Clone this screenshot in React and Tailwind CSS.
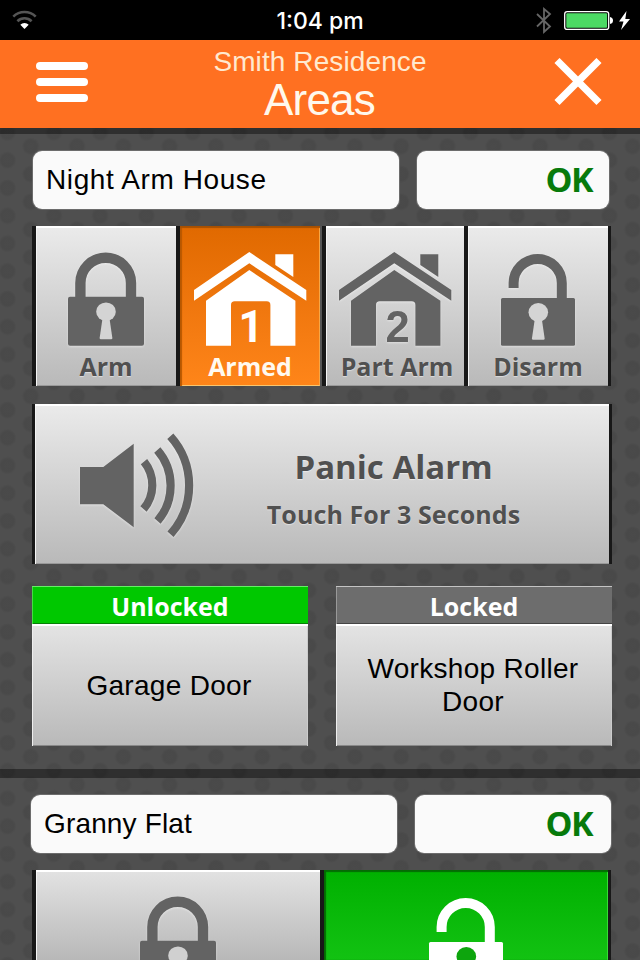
import React from "react";

const SANS = "font-['Liberation_Sans',Arial,sans-serif]";
const HUMANIST = "font-['Open_Sans','Noto_Sans',sans-serif] font-bold";
const SHADOW = "drop-shadow-[0_1px_1px_rgba(255,255,255,0.45)]";

function Keyhole({ x, y, fill }) {
  return (
    <g fill={fill}>
      <ellipse cx={x} cy={y} rx="9.8" ry="9.3" />
      <path d={`M${x - 3.4} ${y + 6}h6.8l3 20.5q-.2 1-1.2 1h-10.4q-1 0-1.2-1z`} />
    </g>
  );
}

function LockIcon({ color, hole }) {
  return (
    <svg viewBox="0 0 140 124" width="140" height="124" className="block shrink-0">
      <path d="M44.4 73V57a25.3 25.3 0 0 1 50.6 0v16" fill="none" stroke={color} strokeWidth="10.4" />
      <rect x="32" y="70.7" width="76" height="49" rx="2" fill={color} />
      <Keyhole x={70} y={85.7} fill={hole} />
    </svg>
  );
}

function UnlockIcon({ color, hole }) {
  return (
    <svg viewBox="0 0 140 124" width="140" height="124" className="block shrink-0">
      <path d="M45.6 62V57a24.1 24.1 0 0 1 48.2 0v16" fill="none" stroke={color} strokeWidth="10" />
      <rect x="33" y="72" width="74" height="47.7" rx="1.5" fill={color} />
      <Keyhole x={70.3} y={86.3} fill={hole} />
    </svg>
  );
}

function HouseIcon({ color, digit, digitX }) {
  return (
    <svg viewBox="0 0 140 124" width="140" height="124" className="block shrink-0">
      <g fill={color}>
        <path d="M69.3 26L14 64v10.7l55.3-37.4 57 37.4V64z" />
        <path d="M95.3 28.3h18V51l-18-12z" />
        <path d="M69.3 44L26 74.7v45h25V79q0-3.7 3.7-3.7h32q3.7 0 3.7 3.7v40.7h25v-45z" />
        <text x={digitX} y="115.8" textAnchor="middle" fontSize="43.5" className={digit === "1" ? "font-['Roboto'] font-bold" : "font-['Liberation_Sans'] font-bold"}>
          {digit}
        </text>
      </g>
    </svg>
  );
}

function SpeakerIcon() {
  return (
    <svg viewBox="0 0 190 158" width="190" height="158" className={"block shrink-0 " + SHADOW}>
      <path d="M45 63h23.3l30.4-23.3v83.6l-30.4-23H45z" fill="#636363" />
      <g fill="none" stroke="#636363" strokeWidth="8.2">
        <path d="M109 57.7a37 37 0 0 1-.5 47.3" />
        <path d="M122.3 46a54.3 54.3 0 0 1 .2 71" />
        <path d="M135.3 32.3a73.5 73.5 0 0 1 .2 98" />
      </g>
    </svg>
  );
}

function StatusBar() {
  return (
    <div className="relative flex h-10 items-center justify-center bg-black text-white">
      <svg className="absolute left-3 top-[10px]" width="25" height="20" viewBox="0 0 25 20">
        <g fill="none" stroke="#555" strokeWidth="2.6">
          <path d="M1.3 6.6a16 16 0 0 1 22.4 0" />
          <path d="M5.4 11.2a10.2 10.2 0 0 1 14.2 0" />
        </g>
        <path d="M12.5 19L8.3 14.7a6 6 0 0 1 8.4 0z" fill="#fff" />
      </svg>
      <span className="pt-[1px] font-['Inter',sans-serif] text-[23px] font-medium leading-10">1:04 pm</span>
      <svg className="absolute left-[534px] top-[6px]" width="100" height="30" viewBox="0 0 100 30">
        <path d="M3 8l13 12.5-6 5.5V3l6 5L3 20.5" fill="none" stroke="#666" strokeWidth="1.8" />
        <rect x="30.7" y="5.6" width="44" height="17.8" rx="2.5" fill="none" stroke="#fff" strokeWidth="1.3" />
        <rect x="32.3" y="7.2" width="40.8" height="14.6" rx="1" fill="#4cd964" />
        <path d="M76 11q3 .5 3 3.5t-3 3.5z" fill="#fff" />
        <path d="M92.5 5L85 15.5h4.5L87 24l9-11h-4.7z" fill="#fff" />
      </svg>
    </div>
  );
}

function Header() {
  return (
    <div className={SANS + " flex h-[88px] items-start justify-between bg-[#ff7021] pl-9 pr-[38px]"}>
      <div className="mt-[22px] flex w-[52px] flex-col gap-2">
        <div className="h-2 rounded-full bg-white" />
        <div className="h-2 rounded-full bg-white" />
        <div className="h-2 rounded-full bg-white" />
      </div>
      <div className="flex flex-col items-center pr-[2px] text-center">
        <div className="mt-[6px] text-[28px] leading-8 tracking-[0.1px] text-[#ffe9cf]">Smith Residence</div>
        <div className="pr-[1px] text-[44px] leading-[44px] tracking-[-0.8px] text-[#fff8ec]">Areas</div>
      </div>
      <svg className="mt-[18px]" width="48" height="48" viewBox="0 0 48 48">
        <path d="M3 2.5l42 42M45 2.5l-42 42" stroke="#fff" strokeWidth="7.2" />
      </svg>
    </div>
  );
}

function Fields({ name, shifted }) {
  return (
    <div className={"flex h-[58px] gap-[18px] " + (shifted ? "pl-[31px]" : "pl-[33px]")}>
      <div
        className={
          SANS +
          " w-[366px] rounded-[9px] bg-[#fafafa] pl-[13px] text-[28px] leading-[58px] text-black shadow-[0_0_0_1px_#6c6c6c] " +
          (shifted ? "tracking-[0.15px]" : "tracking-[0.6px]")
        }
      >
        {name}
      </div>
      <div
        className={
          HUMANIST +
          " rounded-[9px] bg-[#fafafa] text-right text-[34px] leading-[57px] tracking-[-1.6px] text-[#077a0b] shadow-[0_0_0_1px_#6c6c6c] " +
          (shifted ? "w-[196px] pr-[19px]" : "w-[192px] pr-[17px]")
        }
      >
        OK
      </div>
    </div>
  );
}

const TILE = {
  grey: "bg-linear-to-b from-[#ebebeb] to-[#b9b9b9] text-[#505050] shadow-[inset_0_2px_0_#fff,inset_1px_0_0_#f4f4f4,inset_0_-1px_0_#999]",
  orange: "bg-linear-to-b from-[#e06900] to-[#ff8519] text-[#fffaf0] shadow-[inset_0_2px_1px_#a85000,inset_2px_0_1px_#b85800,inset_0_-1px_0_#ffd27a,inset_-1px_0_0_#ffb04d]",
  cropGrey: "bg-linear-to-b from-[#e3e3e3] to-[#b8b8b8] shadow-[inset_0_2px_0_#fff,inset_1px_0_0_#f4f4f4]",
  cropGreen: "bg-linear-to-b from-[#00b000] to-[#12c212] shadow-[inset_0_2px_1px_#046b04,inset_2px_0_1px_#046b04,inset_-1px_0_0_#3de83d]",
};

function Tile({ tone, width, label, children }) {
  const embossed = tone === "grey" || tone === "cropGrey";
  return (
    <div className={"flex flex-col items-center overflow-hidden " + TILE[tone] + " " + width}>
      <div className={embossed ? SHADOW : ""}>{children}</div>
      {label && (
        <div className={HUMANIST + " whitespace-nowrap text-[25px] leading-8 " + (embossed ? "[text-shadow:0_1px_1px_rgba(255,255,255,.5)]" : "")}>
          {label}
        </div>
      )}
    </div>
  );
}

const BAR = "h-full shrink-0 bg-[#181818] ";

function Door({ state, title, open }) {
  return (
    <div className="flex h-[160px] w-[276px] flex-col">
      <div
        className={
          HUMANIST +
          " h-[38px] text-center text-[25px] leading-[41px] text-white " +
          (open
            ? "bg-[#00c800] shadow-[inset_0_1px_0_#66ee66,inset_1px_0_0_#44dd44,inset_0_-1px_0_#068006]"
            : "bg-[#6d6d6d] shadow-[inset_0_1px_0_#c4c4c4,inset_1px_0_0_#999,inset_0_-1px_0_#444]")
        }
      >
        {state}
      </div>
      <div className={SANS + " flex h-[122px] items-center justify-center bg-linear-to-b from-[#e4e4e4] to-[#b9b9b9] pl-[19px] pr-[21px] text-center text-[28px] leading-[33px] tracking-[0.3px] text-black shadow-[inset_0_2px_0_#fff,inset_1px_0_0_#eee,inset_-1px_0_0_#ccc,inset_0_-1px_0_#888]"}>
        {title}
      </div>
    </div>
  );
}

export default function App() {
  return (
    <div className="relative h-[960px] w-[640px] overflow-hidden bg-[#4f4f4f]">
      <svg className="absolute inset-0" width="640" height="960">
        <defs>
          <radialGradient id="dot">
            <stop offset="0" stopColor="#4a4a4a" />
            <stop offset="0.7" stopColor="#494949" />
            <stop offset="1" stopColor="#4f4f4f" />
          </radialGradient>
          <pattern id="dots" width="46.3" height="27.75" patternUnits="userSpaceOnUse" x="-15.6" y="118.6">
            <circle cx="23.15" cy="13.87" r="9" fill="url(#dot)" />
            <circle cx="0" cy="0" r="9" fill="url(#dot)" />
            <circle cx="46.3" cy="0" r="9" fill="url(#dot)" />
            <circle cx="0" cy="27.75" r="9" fill="url(#dot)" />
            <circle cx="46.3" cy="27.75" r="9" fill="url(#dot)" />
          </pattern>
        </defs>
        <rect width="640" height="960" fill="url(#dots)" />
      </svg>
      <div className="relative flex flex-col">
        <StatusBar />
        <Header />
        <div className="mb-[17px] h-[6px] bg-black/40" />
        <Fields name="Night Arm House" />
        <div className="ml-8 mt-[17px] flex h-[160px]">
          <div className={BAR + "w-1"} />
          <Tile tone="grey" width="w-[140px]" label="Arm">
            <LockIcon color="#636363" hole="#d4d4d4" />
          </Tile>
          <div className={BAR + "w-1"} />
          <Tile tone="orange" width="w-[140px]" label="Armed">
            <HouseIcon color="#fff" digit="1" digitX={71} />
          </Tile>
          <div className="h-full w-[2px] bg-[#555]" />
          <div className={BAR + "w-1"} />
          <Tile tone="grey" width="w-[138px]" label={<span className="ml-[4px]">Part Arm</span>}>
            <HouseIcon color="#636363" digit="2" digitX={72.5} />
          </Tile>
          <div className={BAR + "w-1"} />
          <Tile tone="grey" width="w-[140px]" label="Disarm">
            <UnlockIcon color="#636363" hole="#d4d4d4" />
          </Tile>
          <div className={BAR + "w-[3px]"} />
        </div>
        <div className="ml-8 mt-[18px] flex h-[160px] w-[580px]">
          <div className={BAR + "w-[3px]"} />
          <div className={"flex flex-1 " + TILE.grey}>
            <SpeakerIcon />
            <div className={HUMANIST + " flex flex-1 flex-col items-center pr-[47px] pt-[41px] text-center [text-shadow:0_1px_1px_rgba(255,255,255,.5)]"}>
              <div className="whitespace-nowrap text-[33px] leading-[44px]">Panic Alarm</div>
              <div className="mt-[7px] whitespace-nowrap text-[25px] leading-[36px] tracking-[0.1px]">Touch For 3 Seconds</div>
            </div>
          </div>
          <div className={BAR + "w-[3px]"} />
        </div>
        <div className="ml-8 mt-[22px] flex gap-7">
          <Door state="Unlocked" title="Garage Door" open />
          <Door state="Locked" title="Workshop Roller Door" />
        </div>
        <div className="mb-[17px] mt-[23px] h-[9px] bg-black/40" />
        <Fields name="Granny Flat" shifted />
        <div className="ml-8 mt-[17px] flex h-[90px]">
          <div className={BAR + "w-1"} />
          <Tile tone="cropGrey" width="w-[284px]">
            <LockIcon color="#636363" hole="#d0d0d0" />
          </Tile>
          <div className={BAR + "w-1"} />
          <Tile tone="cropGreen" width="w-[284px]">
            <UnlockIcon color="#fff" hole="#0da50d" />
          </Tile>
          <div className={BAR + "w-[3px]"} />
        </div>
      </div>
    </div>
  );
}
